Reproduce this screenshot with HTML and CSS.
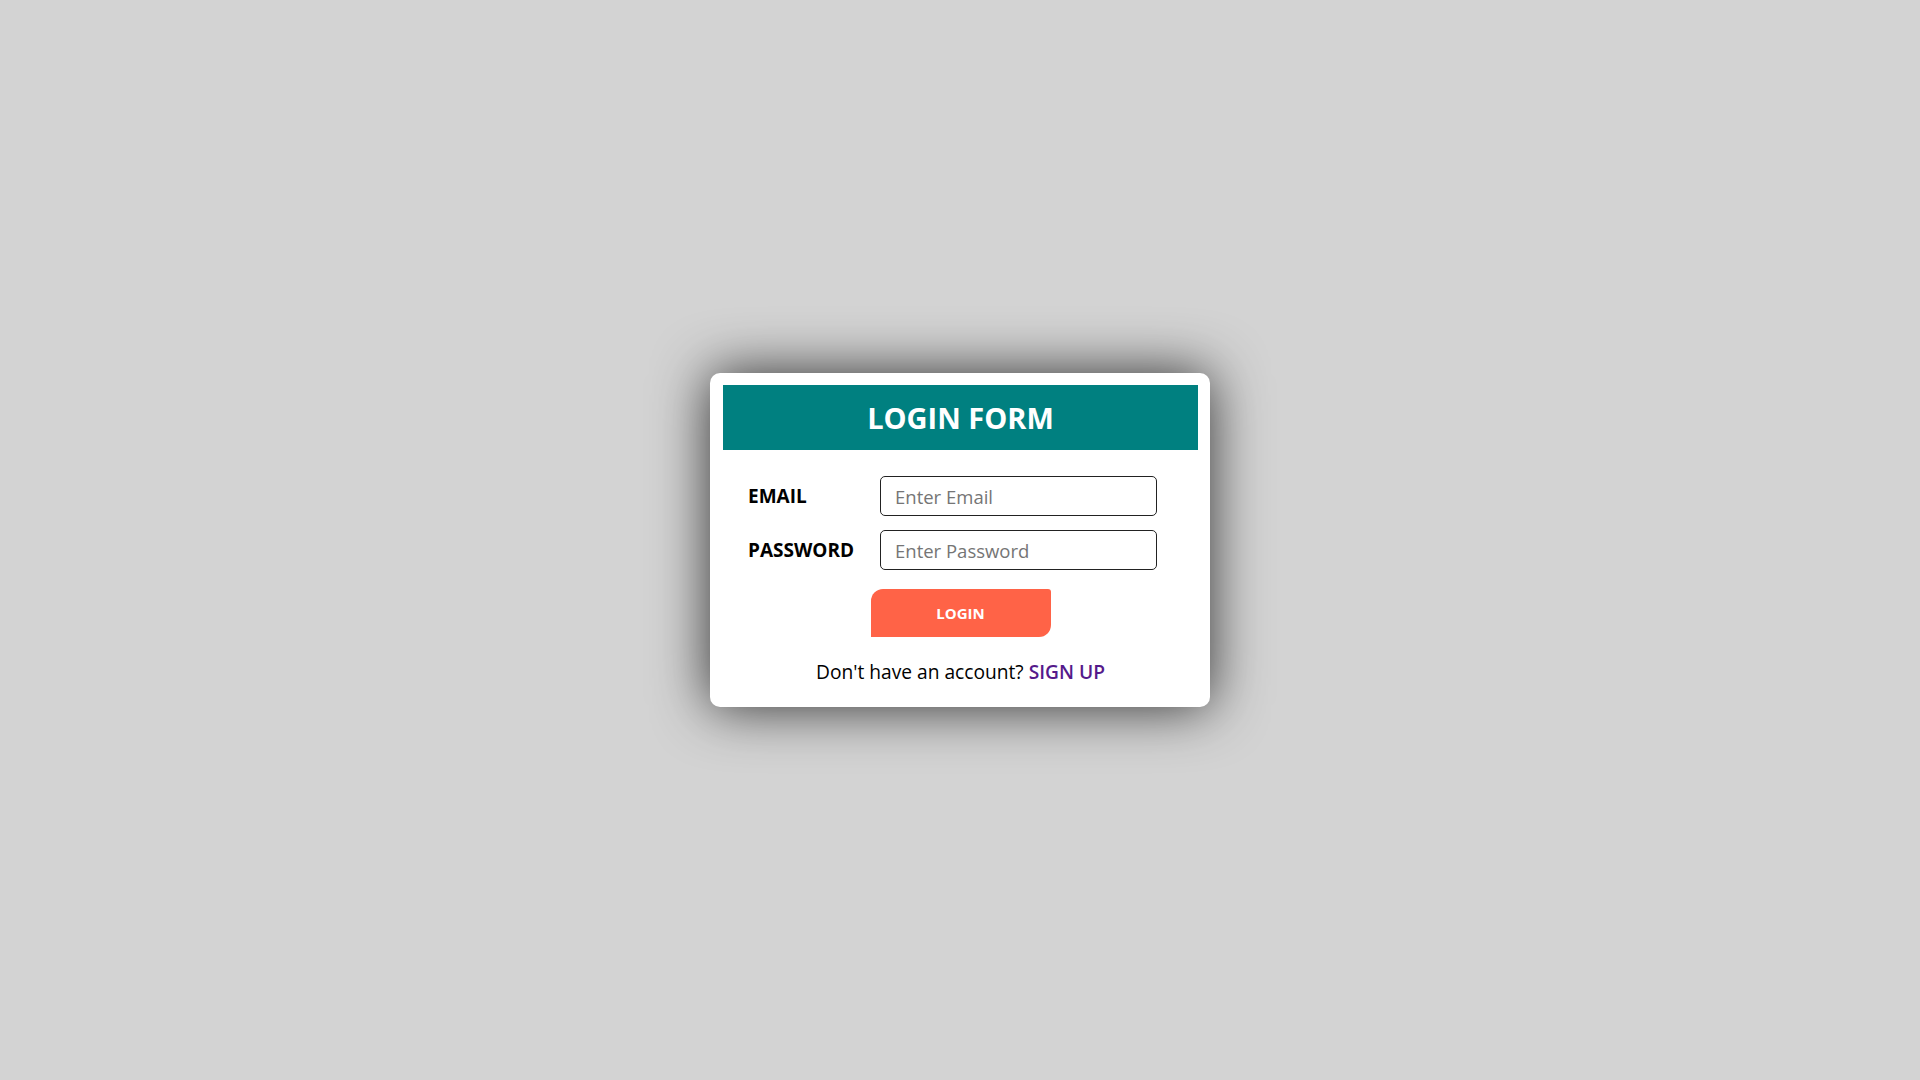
FILE: index.html
```html
<!DOCTYPE html>
<html lang="en">
<head>
<meta charset="utf-8">
<title>Login Form</title>
<link rel="stylesheet" href="styles.css">
</head>
<body>
<div class="card">
  <h1 class="title">LOGIN FORM</h1>
  <form class="form">
    <label class="label" for="email">EMAIL</label>
    <input class="input" id="email" type="text" placeholder="Enter Email">
    <label class="label" for="password">PASSWORD</label>
    <input class="input" id="password" type="password" placeholder="Enter Password">
  </form>
  <div class="actions">
    <button class="btn" type="button">LOGIN</button>
  </div>
  <p class="signup">Don't have an account? <a class="signup-link" href="#">SIGN UP</a></p>
</div>
</body>
</html>
```

FILE: styles.css
```css
html, body {
  margin: 0;
  padding: 0;
}
body {
  background: #d3d3d3;
  height: 100vh;
  display: flex;
  align-items: center;
  justify-content: center;
  font-family: "Open Sans", "Noto Sans", sans-serif;
}
.card {
  box-sizing: border-box;
  width: 500px;
  height: 334px;
  background: #fff;
  border-radius: 10px;
  padding: 12px 12px 0 13px;
  box-shadow: 0 0 55px rgba(0, 0, 0, 0.78);
}
.title {
  margin: 0;
  height: 65px;
  background: #008080;
  color: #fff;
  font-size: 29px;
  font-weight: 700;
  line-height: 66px;
  text-align: center;
}
.form {
  display: grid;
  grid-template-columns: 132px 277px;
  row-gap: 14px;
  align-items: center;
  margin: 26px 0 0 25px;
}
.label {
  font-size: 19px;
  font-weight: 700;
  color: #000;
}
.input {
  box-sizing: border-box;
  height: 40px;
  width: 277px;
  border: 1px solid #222;
  border-radius: 5px;
  padding: 0 14px;
  font-family: inherit;
  font-size: 18.5px;
  color: #333;
  outline: none;
}
.input::placeholder {
  color: #757575;
}
.actions {
  display: flex;
  justify-content: center;
  margin-top: 19px;
}
.btn {
  width: 180px;
  height: 48px;
  border: none;
  background: #ff6347;
  color: #fff;
  font-family: inherit;
  font-size: 15px;
  font-weight: 700;
  border-radius: 12px 3px 12px 0;
  cursor: pointer;
}
.signup {
  margin: 21px 0 0;
  text-align: center;
  font-size: 19.2px;
  color: #000;
}
.signup-link {
  color: #551a8b;
  font-weight: 600;
  text-decoration: none;
}
```
